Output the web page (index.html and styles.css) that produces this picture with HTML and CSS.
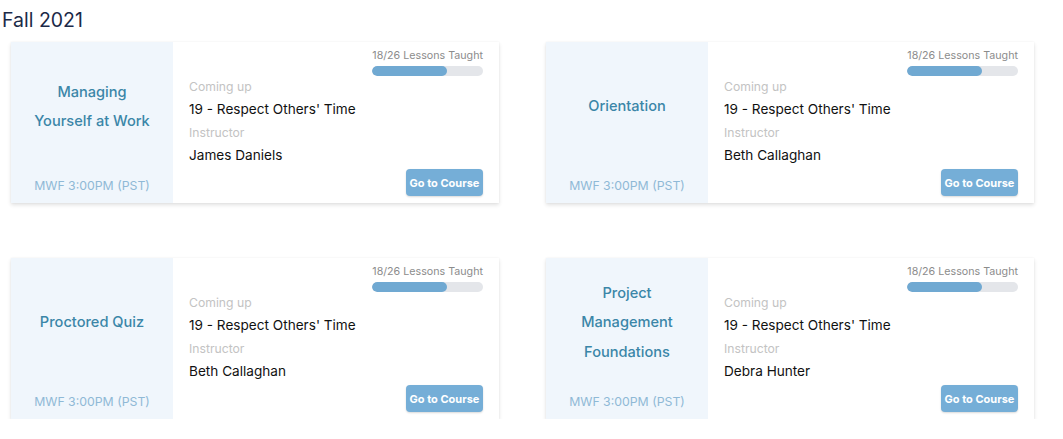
FILE: index.html
```html
<!DOCTYPE html>
<html lang="en">
<head>
<meta charset="utf-8">
<title>Fall 2021</title>
<link rel="stylesheet" href="styles.css">
</head>
<body>
<div class="page">
  <h1 class="term">Fall 2021</h1>
  <div class="grid">
    <div class="card">
      <div class="card-side">
        <div class="course-title">Managing Yourself at Work</div>
        <div class="schedule">MWF 3:00PM (PST)</div>
      </div>
      <div class="card-main">
        <div class="progress">
          <div class="progress-label">18/26 Lessons Taught</div>
          <div class="progress-track"><div class="progress-fill" style="width: 68%"></div></div>
        </div>
        <div class="field-label first">Coming up</div>
        <div class="field-value">19 - Respect Others' Time</div>
        <div class="field-label">Instructor</div>
        <div class="field-value">James Daniels</div>
        <div class="actions"><button class="btn">Go to Course</button></div>
      </div>
    </div>
    <div class="card">
      <div class="card-side">
        <div class="course-title">Orientation</div>
        <div class="schedule">MWF 3:00PM (PST)</div>
      </div>
      <div class="card-main">
        <div class="progress">
          <div class="progress-label">18/26 Lessons Taught</div>
          <div class="progress-track"><div class="progress-fill" style="width: 68%"></div></div>
        </div>
        <div class="field-label first">Coming up</div>
        <div class="field-value">19 - Respect Others' Time</div>
        <div class="field-label">Instructor</div>
        <div class="field-value">Beth Callaghan</div>
        <div class="actions"><button class="btn">Go to Course</button></div>
      </div>
    </div>
    <div class="card">
      <div class="card-side">
        <div class="course-title">Proctored Quiz</div>
        <div class="schedule">MWF 3:00PM (PST)</div>
      </div>
      <div class="card-main">
        <div class="progress">
          <div class="progress-label">18/26 Lessons Taught</div>
          <div class="progress-track"><div class="progress-fill" style="width: 68%"></div></div>
        </div>
        <div class="field-label first">Coming up</div>
        <div class="field-value">19 - Respect Others' Time</div>
        <div class="field-label">Instructor</div>
        <div class="field-value">Beth Callaghan</div>
        <div class="actions"><button class="btn">Go to Course</button></div>
      </div>
    </div>
    <div class="card">
      <div class="card-side">
        <div class="course-title">Project Management Foundations</div>
        <div class="schedule">MWF 3:00PM (PST)</div>
      </div>
      <div class="card-main">
        <div class="progress">
          <div class="progress-label">18/26 Lessons Taught</div>
          <div class="progress-track"><div class="progress-fill" style="width: 68%"></div></div>
        </div>
        <div class="field-label first">Coming up</div>
        <div class="field-value">19 - Respect Others' Time</div>
        <div class="field-label">Instructor</div>
        <div class="field-value">Debra Hunter</div>
        <div class="actions"><button class="btn">Go to Course</button></div>
      </div>
    </div>
  </div>
</div>
</body>
</html>
```
FILE: styles.css
```css
* { box-sizing: border-box; }
html, body { margin: 0; padding: 0; background: #ffffff; }
body {
  font-family: Inter, "Noto Sans", "Liberation Sans", sans-serif;
  color: #111111;
}
.page { padding: 7px 0 0 0; }
.term {
  margin: 0;
  padding-left: 2px;
  font-size: 19.5px;
  line-height: 26px;
  font-weight: 400;
  color: #1c2a48;
}
.grid {
  margin-top: 9px;
  padding-left: 11px;
  display: grid;
  grid-template-columns: 488px 488px;
  column-gap: 47px;
  row-gap: 55px;
}
.card {
  display: flex;
  height: 161px;
  background: #ffffff;
  box-shadow: 0 2px 4px rgba(0, 0, 0, 0.12), 0 0 2px rgba(0, 0, 0, 0.04);
}
.card-side {
  width: 162px;
  flex: none;
  background: #f0f6fc;
  display: flex;
  flex-direction: column;
  text-align: center;
  padding: 1px 20px 0;
}
.course-title {
  flex: 1;
  display: flex;
  align-items: center;
  justify-content: center;
  font-size: 14.6px;
  line-height: 29.5px;
  font-weight: 500;
  color: #3b86a8;
}
.schedule {
  margin: 0 -10px;
  padding: 6px 0 9px;
  font-size: 12.3px;
  line-height: 17px;
  color: #8fb9d6;
  white-space: nowrap;
}
.card-main {
  flex: 1;
  display: flex;
  flex-direction: column;
  padding: 7px 16px 6px;
}
.progress {
  align-self: flex-end;
  width: 111px;
  display: flex;
  flex-direction: column;
  align-items: flex-end;
}
.progress-label {
  font-size: 10.7px;
  line-height: 14px;
  color: #8c8c8c;
  white-space: nowrap;
}
.progress-track {
  margin-top: 3px;
  width: 111px;
  height: 10px;
  border-radius: 5px;
  background: #e4e6ea;
  overflow: hidden;
}
.progress-fill {
  height: 100%;
  border-radius: 5px;
  background: #70a9d2;
}
.field-label {
  margin-top: 3px;
  font-size: 12.2px;
  line-height: 20px;
  color: #c3c3c3;
}
.field-label.first { margin-top: 1px; }
.field-value {
  margin-top: 1px;
  font-size: 13.6px;
  line-height: 22px;
  color: #111111;
}
.actions {
  margin-top: 3px;
  display: flex;
  justify-content: flex-end;
}
.btn {
  width: 77px;
  height: 27px;
  border: none;
  border-radius: 4px;
  background: #75aed7;
  color: #ffffff;
  font-family: Inter, "Noto Sans", "Liberation Sans", sans-serif;
  font-size: 11px;
  font-weight: 700;
  padding: 0;
  box-shadow: 0 1px 2px rgba(0, 0, 0, 0.15);
  cursor: pointer;
}
```
